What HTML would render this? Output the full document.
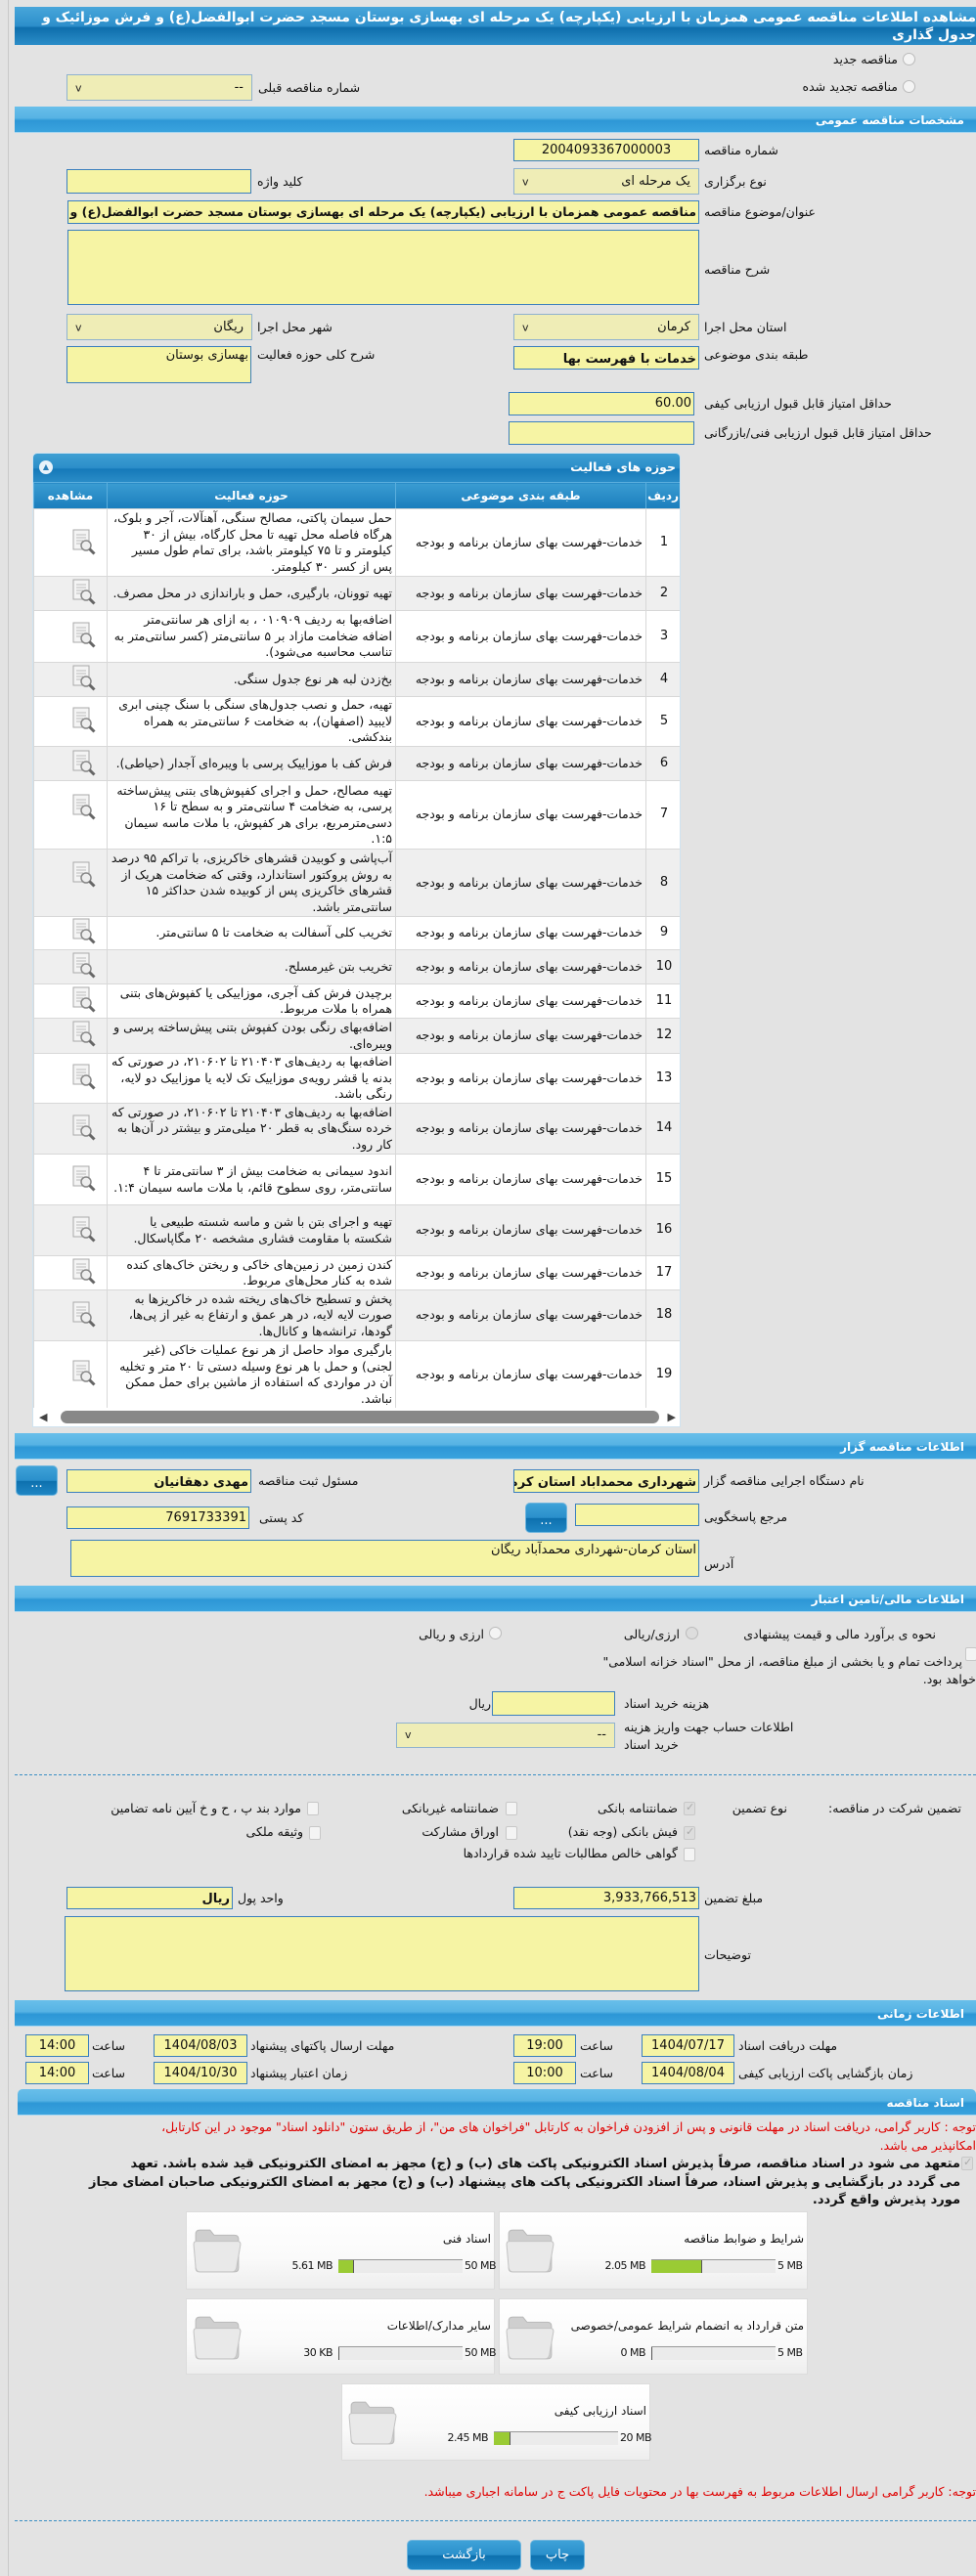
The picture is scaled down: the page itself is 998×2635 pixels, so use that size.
<!DOCTYPE html>
<html><head><meta charset="utf-8"><style>
*{margin:0;padding:0;box-sizing:border-box}
body{width:998px;height:2635px;background:#e3e3e3;font-family:"DejaVu Sans",sans-serif;font-size:12px;color:#111;position:relative;overflow:hidden}
.a{position:absolute}
.l{position:absolute;direction:rtl;white-space:nowrap;font-size:12.5px;text-align:right}
.m{position:absolute;direction:rtl;white-space:nowrap;font-size:12.5px;left:720px}
.f{position:absolute;background:#f6f4a4;border:1px solid #3b7fbe;direction:rtl;white-space:nowrap;overflow:hidden;font-size:13px;padding:0 2px;text-align:right}
.s{position:absolute;background:#efedb6;border:1px solid #8fb2cf;direction:rtl;font-size:13px;padding:0 8px;overflow:hidden;white-space:nowrap}
.s:after{content:"v";position:absolute;left:8px;top:50%;transform:translateY(-50%);font-size:11px;color:#222}
.sec{position:absolute;left:15px;width:983px;height:27px;background:linear-gradient(#68bfea,#57b3e4 45%,#2d97d6 55%,#3aa3de);color:#fff;font-weight:bold;font-size:12px;direction:rtl;padding:7px 12px 0 0;border-bottom:1px solid #a8d6ef}
.btn{position:absolute;background:linear-gradient(#3ea2d8,#2a8fcb 50%,#0d70ae 52%,#1f86c4);border:1px solid #6fb5dd;border-radius:5px;color:#fff;text-align:center;font-size:13px}
table{border-collapse:collapse;table-layout:fixed;direction:rtl}
td{border:1px solid #d8d8d8;vertical-align:middle;font-size:12px;line-height:17px;padding:0 3px;overflow:hidden}
tr.o td{background:#fff}tr.e td{background:#efefef}
.cb{position:absolute;width:12px;height:14px;border:1px solid #c8c8c8;border-radius:2px;background:#f4f4f4}
.cb.k{background:#ddd}
.cb.k:after{content:"✓";position:absolute;left:1px;top:-2px;font-size:11px;color:#aaa}
.rd{position:absolute;width:13px;height:13px;border:1px solid #bbb;border-radius:50%;background:#f4f4f4}
.doc{position:absolute;width:316px;height:80px;background:linear-gradient(#fff,#fafafa 60%,#eeeeee);border:1px solid #dcdcdc}
.doc .t{position:absolute;right:3px;top:20px;direction:rtl;font-size:12px;white-space:nowrap}
.doc .bar{position:absolute;left:155px;top:48px;width:127px;height:14px;background:#ebebeb;border-top:1px solid #999}
.doc .bar i{position:absolute;left:0;top:0;bottom:0;background:#9acb34;border-right:1px solid #555}
.doc .mx{position:absolute;left:284px;top:48px;font-size:11px;letter-spacing:-0.5px;white-space:nowrap}
.doc .cu{position:absolute;right:165px;top:48px;font-size:11px;letter-spacing:-0.5px;white-space:nowrap}
.doc svg{position:absolute;left:4px;top:14px}
#tb td{font-size:12.5px;line-height:16.5px}
#tb td:first-child{text-align:center;font-size:13px}
</style></head><body>
<div class="a" style="left:8px;top:0;width:1px;height:2635px;background:#c9c9c9"></div>
<div class="a" style="left:15px;top:7px;width:983px;height:39px;background:linear-gradient(#48a6da,#2d8fcb 50%,#0e6eac 55%,#2b8dc8);color:#fff;font-weight:bold;font-size:14px;line-height:18px;direction:rtl;padding:2px 0 0 0;white-space:normal;overflow:hidden">مشاهده اطلاعات مناقصه عمومی همزمان با ارزیابی (یکپارچه) یک مرحله ای بهسازی بوستان مسجد حضرت ابوالفضل(ع) و فرش موزائیک و جدول گذاری</div>

<div class="rd" style="left:923px;top:54px"></div><div class="l" style="right:80px;top:53px">مناقصه جدید</div>
<div class="rd" style="left:923px;top:82px"></div><div class="l" style="right:80px;top:81px">مناقصه تجدید شده</div>
<div class="s" style="left:68px;top:76px;width:190px;height:27px;line-height:25px">--</div>
<div class="l" style="left:264px;top:82px">شماره مناقصه قبلی</div>

<div class="sec" style="top:109px">مشخصات مناقصه عمومی</div>

<div class="f" style="left:525px;top:142px;width:190px;height:23px;line-height:21px;text-align:center">2004093367000003</div>
<div class="m" style="top:146px">شماره مناقصه</div>
<div class="s" style="left:525px;top:172px;width:190px;height:27px;line-height:25px">یک مرحله ای</div>
<div class="m" style="top:178px">نوع برگزاری</div>
<div class="f" style="left:68px;top:173px;width:189px;height:25px"></div>
<div class="l" style="left:263px;top:178px">کلید واژه</div>
<div class="f" style="left:69px;top:205px;width:646px;height:24px;line-height:22px;font-weight:bold;font-size:12.5px">مناقصه عمومی همزمان با ارزیابی (یکپارچه) یک مرحله ای بهسازی بوستان مسجد حضرت ابوالفضل(ع) و فرش موزائیک و جدول گذاری</div>
<div class="m" style="top:209px">عنوان/موضوع مناقصه</div>
<div class="f" style="left:69px;top:235px;width:646px;height:77px"></div>
<div class="m" style="top:268px">شرح مناقصه</div>
<div class="s" style="left:525px;top:321px;width:190px;height:27px;line-height:25px">کرمان</div>
<div class="m" style="top:327px">استان محل اجرا</div>
<div class="s" style="left:68px;top:321px;width:190px;height:27px;line-height:25px">ریگان</div>
<div class="l" style="left:263px;top:327px">شهر محل اجرا</div>
<div class="f" style="left:525px;top:354px;width:190px;height:24px;line-height:26px;font-weight:bold">خدمات با فهرست بها</div>
<div class="m" style="top:355px">طبقه بندی موضوعی</div>
<div class="f" style="left:68px;top:354px;width:189px;height:38px;line-height:18px">بهسازی بوستان</div>
<div class="l" style="left:263px;top:355px">شرح کلی حوزه فعالیت</div>
<div class="f" style="left:520px;top:401px;width:190px;height:24px;line-height:22px">60.00</div>
<div class="m" style="top:405px">حداقل امتیاز قابل قبول ارزیابی کیفی</div>
<div class="f" style="left:520px;top:431px;width:190px;height:24px"></div>
<div class="m" style="top:435px">حداقل امتیاز قابل قبول ارزیابی فنی/بازرگانی</div>

<!-- activity panel -->
<div class="a" style="left:33px;top:463px;width:663px;height:997px;background:#fff;border:1px solid #cfe3f0;border-radius:5px 5px 0 0;overflow:hidden">
<div style="height:29px;background:linear-gradient(#3e9fd3,#2c8ec9 50%,#1579b9 55%,#2a8cc7);color:#fff;font-weight:bold;font-size:12.5px;direction:rtl;padding:6px 4px 0 0;position:relative">حوزه های فعالیت<span style="position:absolute;left:6px;top:7px;width:14px;height:14px;border-radius:50%;background:#e8f2fa;color:#2a7fb8;font-size:8px;line-height:14px;text-align:center">▲</span></div>
<table style="width:663px;position:absolute;top:29px;left:0">
<colgroup><col style="width:37px"><col style="width:256px"><col style="width:295px"><col style="width:75px"></colgroup>
<tr style="height:27px"><td style="background:linear-gradient(#3a9cd2,#1a7dbc);color:#fff;font-weight:bold;border-color:#5aaedd;text-align:right">ردیف</td><td style="background:linear-gradient(#3a9cd2,#1a7dbc);color:#fff;font-weight:bold;border-color:#5aaedd;text-align:center">طبقه بندی موضوعی</td><td style="background:linear-gradient(#3a9cd2,#1a7dbc);color:#fff;font-weight:bold;border-color:#5aaedd;text-align:center">حوزه فعالیت</td><td style="background:linear-gradient(#3a9cd2,#1a7dbc);color:#fff;font-weight:bold;border-color:#5aaedd;text-align:center">مشاهده</td></tr>
</table>
<table id="tb" style="width:663px;position:absolute;top:56px;left:0">
<colgroup><col style="width:37px"><col style="width:256px"><col style="width:295px"><col style="width:75px"></colgroup>
<tr class="o" style="height:69px"><td>1</td><td>خدمات-فهرست بهای سازمان برنامه و بودجه</td><td>حمل سیمان پاکتی، مصالح سنگی، آهنآلات، آجر و بلوک، هرگاه فاصله محل تهیه تا محل کارگاه، بیش از ۳۰ کیلومتر و تا ۷۵ کیلومتر باشد، برای تمام طول مسیر پس از کسر ۳۰ کیلومتر.</td><td></td></tr>
<tr class="e" style="height:35px"><td>2</td><td>خدمات-فهرست بهای سازمان برنامه و بودجه</td><td>تهیه توونان، بارگیری، حمل و باراندازی در محل مصرف.</td><td></td></tr>
<tr class="o" style="height:53px"><td>3</td><td>خدمات-فهرست بهای سازمان برنامه و بودجه</td><td>اضافه‌بها به ردیف ۰۱۰۹۰۹ ، به ازای هر سانتی‌متر اضافه ضخامت مازاد بر ۵ سانتی‌متر (کسر سانتی‌متر به تناسب محاسبه می‌شود).</td><td></td></tr>
<tr class="e" style="height:35px"><td>4</td><td>خدمات-فهرست بهای سازمان برنامه و بودجه</td><td>بخ‌زدن لبه هر نوع جدول سنگی.</td><td></td></tr>
<tr class="o" style="height:51px"><td>5</td><td>خدمات-فهرست بهای سازمان برنامه و بودجه</td><td>تهیه، حمل و نصب جدول‌های سنگی با سنگ چینی ابری لایبید (اصفهان)، به ضخامت ۶ سانتی‌متر به همراه بندکشی.</td><td></td></tr>
<tr class="e" style="height:35px"><td>6</td><td>خدمات-فهرست بهای سازمان برنامه و بودجه</td><td>فرش کف با موزاییک پرسی با ویبره‌ای آجدار (حیاطی).</td><td></td></tr>
<tr class="o" style="height:70px"><td>7</td><td>خدمات-فهرست بهای سازمان برنامه و بودجه</td><td>تهیه مصالح، حمل و اجرای کفپوش‌های بتنی پیش‌ساخته پرسی، به ضخامت ۴ سانتی‌متر و به سطح تا ۱۶ دسی‌مترمربع، برای هر کفپوش، با ملات ماسه سیمان ۱:۵.</td><td></td></tr>
<tr class="e" style="height:69px"><td>8</td><td>خدمات-فهرست بهای سازمان برنامه و بودجه</td><td>آب‌پاشی و کوبیدن قشرهای خاکریزی، با تراکم ۹۵ درصد به روش پروکتور استاندارد، وقتی که ضخامت هریک از قشرهای خاکریزی پس از کوبیده شدن حداکثر ۱۵ سانتی‌متر باشد.</td><td></td></tr>
<tr class="o" style="height:34px"><td>9</td><td>خدمات-فهرست بهای سازمان برنامه و بودجه</td><td>تخریب کلی آسفالت  به ضخامت تا ۵ سانتی‌متر.</td><td></td></tr>
<tr class="e" style="height:35px"><td>10</td><td>خدمات-فهرست بهای سازمان برنامه و بودجه</td><td>تخریب بتن غیرمسلح.</td><td></td></tr>
<tr class="o" style="height:35px"><td>11</td><td>خدمات-فهرست بهای سازمان برنامه و بودجه</td><td>برچیدن فرش کف آجری، موزاییکی یا کفپوش‌های بتنی همراه با ملات مربوط.</td><td></td></tr>
<tr class="e" style="height:36px"><td>12</td><td>خدمات-فهرست بهای سازمان برنامه و بودجه</td><td>اضافه‌بهای رنگی بودن کفپوش بتنی پیش‌ساخته پرسی و ویبره‌ای.</td><td></td></tr>
<tr class="o" style="height:51px"><td>13</td><td>خدمات-فهرست بهای سازمان برنامه و بودجه</td><td>اضافه‌بها به ردیف‌های ۲۱۰۴۰۳ تا ۲۱۰۶۰۲، در صورتی که بدنه یا قشر رویه‌ی موزاییک تک لایه یا موزاییک دو لایه، رنگی باشد.</td><td></td></tr>
<tr class="e" style="height:52px"><td>14</td><td>خدمات-فهرست بهای سازمان برنامه و بودجه</td><td>اضافه‌بها به ردیف‌های ۲۱۰۴۰۳ تا ۲۱۰۶۰۲، در صورتی که خرده سنگ‌های به قطر ۲۰ میلی‌متر و بیشتر در آن‌ها به کار رود.</td><td></td></tr>
<tr class="o" style="height:52px"><td>15</td><td>خدمات-فهرست بهای سازمان برنامه و بودجه</td><td>اندود سیمانی به ضخامت بیش از ۳ سانتی‌متر تا ۴ سانتی‌متر، روی سطوح قائم، با ملات ماسه سیمان ۱:۴.</td><td></td></tr>
<tr class="e" style="height:52px"><td>16</td><td>خدمات-فهرست بهای سازمان برنامه و بودجه</td><td>تهیه و اجرای بتن با شن و ماسه شسته طبیعی یا شکسته با مقاومت فشاری مشخصه ۲۰ مگاپاسکال.</td><td></td></tr>
<tr class="o" style="height:35px"><td>17</td><td>خدمات-فهرست بهای سازمان برنامه و بودجه</td><td>کندن زمین در زمین‌های خاکی و ریختن خاک‌های کنده شده به کنار محل‌های مربوط.</td><td></td></tr>
<tr class="e" style="height:52px"><td>18</td><td>خدمات-فهرست بهای سازمان برنامه و بودجه</td><td>پخش و تسطیح خاک‌های ریخته شده در خاکریزها به صورت لایه لایه، در هر عمق و ارتفاع به غیر از پی‌ها، گودها، ترانشه‌ها و کانال‌ها.</td><td></td></tr>
<tr class="o" style="height:69px"><td>19</td><td>خدمات-فهرست بهای سازمان برنامه و بودجه</td><td>بارگیری مواد حاصل از هر نوع عملیات خاکی (غیر لجنی) و حمل با هر نوع وسیله دستی تا ۲۰ متر و تخلیه آن در مواردی که استفاده از ماشین برای حمل ممکن نباشد.</td><td></td></tr>
</table>
<div style="position:absolute;left:0;top:976px;width:663px;height:21px;background:#fff">
<div style="position:absolute;left:28px;top:3px;width:612px;height:13px;border-radius:7px;background:#888"></div>
<div style="position:absolute;left:6px;top:3px;font-size:11px;color:#444">◀</div><div style="position:absolute;right:6px;top:3px;font-size:11px;color:#444">▶</div></div>
</div>
<svg width="0" height="0" style="position:absolute"><defs><g id="mg"><rect x="2" y="1" width="16" height="20" fill="#f4f4f4" stroke="#aaa"/><path d="M5 6h10M5 9h10M5 12h7M5 15h5" stroke="#bbb"/><circle cx="15" cy="17" r="5" fill="#eee" stroke="#888" stroke-width="1.5"/><path d="M18.5 20.5l5 5" stroke="#666" stroke-width="3"/></g>
<g id="fd"><path d="M4 8 q0-4 4-4 h10 l4 5 h20 q4 0 4 4 v28 q0 4-4 4 h-34 q-4 0-4-4z" fill="#cfcfcf" stroke="#bbb"/><path d="M2 18 q0-3 3-3 h40 q3 0 3 3 l-4 23 q-1 4-4 4 h-32 q-3 0-4-4z" fill="#e9e9e9" stroke="#c4c4c4"/></g></defs></svg>

<!-- tenderer -->
<div class="sec" style="top:1466px">اطلاعات مناقصه گزار</div>
<div class="f" style="left:525px;top:1503px;width:190px;height:24px;line-height:26px;font-weight:bold">شهرداری محمداباد استان کرمان</div>
<div class="m" style="top:1507px">نام دستگاه اجرایی مناقصه گزار</div>
<div class="btn" style="left:16px;top:1499px;width:43px;height:31px;line-height:36px">...</div>
<div class="f" style="left:68px;top:1503px;width:189px;height:24px;line-height:26px;font-weight:bold">مهدی دهقانیان</div>
<div class="l" style="left:264px;top:1507px">مسئول ثبت مناقصه</div>
<div class="f" style="left:588px;top:1538px;width:127px;height:23px"></div>
<div class="m" style="top:1544px">مرجع پاسخگویی</div>
<div class="btn" style="left:537px;top:1537px;width:43px;height:31px;line-height:36px">...</div>
<div class="f" style="left:68px;top:1541px;width:187px;height:23px;line-height:22px">7691733391</div>
<div class="l" style="left:265px;top:1545px">کد پستی</div>
<div class="f" style="left:72px;top:1575px;width:643px;height:38px;line-height:20px">استان کرمان-شهرداری محمدآباد ریگان</div>
<div class="m" style="top:1592px">آدرس</div>

<!-- finance -->
<div class="sec" style="top:1622px">اطلاعات مالی/تامین اعتبار</div>
<div class="l" style="right:41px;top:1664px">نحوه ی برآورد مالی و قیمت پیشنهادی</div>
<div class="rd" style="left:701px;top:1664px;background:#ddd"></div><div class="l" style="right:303px;top:1664px">ارزی/ریالی</div>
<div class="rd" style="left:500px;top:1664px"></div><div class="l" style="right:503px;top:1664px">ارزی و ریالی</div>
<div class="cb" style="left:987px;top:1685px"></div>
<div class="l" style="right:14px;top:1692px">پرداخت تمام و یا بخشی از مبلغ مناقصه، از محل "اسناد خزانه اسلامی"</div>
<div class="l" style="right:0px;top:1710px">خواهد بود.</div>
<div class="f" style="left:503px;top:1730px;width:126px;height:25px"></div>
<div class="l" style="right:496px;top:1735px">ریال</div>
<div class="l" style="left:638px;top:1735px">هزینه خرید اسناد</div>
<div class="s" style="left:405px;top:1762px;width:224px;height:26px;line-height:24px">--</div>
<div class="l" style="left:638px;top:1759px">اطلاعات حساب جهت واریز هزینه</div>
<div class="l" style="left:638px;top:1777px">خرید اسناد</div>
<div class="a" style="left:15px;top:1815px;width:983px;border-top:1px dashed #3b8fc4"></div>

<div class="l" style="right:15px;top:1842px">تضمین شرکت در مناقصه:</div>
<div class="l" style="right:193px;top:1842px">نوع تضمین</div>
<div class="cb k" style="left:699px;top:1843px"></div><div class="l" style="right:305px;top:1842px">ضمانتنامه بانکی</div>
<div class="cb" style="left:517px;top:1843px"></div><div class="l" style="right:488px;top:1842px">ضمانتنامه غیربانکی</div>
<div class="cb" style="left:314px;top:1843px"></div><div class="l" style="right:690px;top:1842px">موارد بند پ ، ح و خ آیین نامه تضامین</div>
<div class="cb k" style="left:699px;top:1868px"></div><div class="l" style="right:305px;top:1866px">فیش بانکی (وجه نقد)</div>
<div class="cb" style="left:517px;top:1868px"></div><div class="l" style="right:488px;top:1866px">اوراق مشارکت</div>
<div class="cb" style="left:316px;top:1868px"></div><div class="l" style="right:688px;top:1866px">وثیقه ملکی</div>
<div class="cb" style="left:699px;top:1890px"></div><div class="l" style="right:305px;top:1888px">گواهی خالص مطالبات تایید شده قراردادها</div>

<div class="f" style="left:525px;top:1930px;width:190px;height:23px;line-height:22px">3,933,766,513</div>
<div class="m" style="top:1934px">مبلغ تضمین</div>
<div class="f" style="left:68px;top:1930px;width:170px;height:23px;line-height:24px;font-weight:bold">ریال</div>
<div class="l" style="left:243px;top:1934px">واحد پول</div>
<div class="f" style="left:66px;top:1960px;width:649px;height:77px"></div>
<div class="m" style="top:1992px">توضیحات</div>

<!-- time -->
<div class="sec" style="top:2046px">اطلاعات زمانی</div>
<div class="f" style="left:656px;top:2081px;width:95px;height:23px;line-height:22px;text-align:center">1404/07/17</div>
<div class="l" style="left:755px;top:2085px">مهلت دریافت اسناد</div>
<div class="f" style="left:525px;top:2081px;width:64px;height:23px;line-height:22px;text-align:center">19:00</div>
<div class="l" style="left:593px;top:2085px">ساعت</div>
<div class="f" style="left:157px;top:2081px;width:96px;height:23px;line-height:22px;text-align:center">1404/08/03</div>
<div class="l" style="left:256px;top:2085px">مهلت ارسال پاکتهای پیشنهاد</div>
<div class="f" style="left:26px;top:2081px;width:65px;height:23px;line-height:22px;text-align:center">14:00</div>
<div class="l" style="left:94px;top:2085px">ساعت</div>
<div class="f" style="left:656px;top:2109px;width:95px;height:23px;line-height:22px;text-align:center">1404/08/04</div>
<div class="l" style="left:755px;top:2113px">زمان بازگشایی پاکت ارزیابی کیفی</div>
<div class="f" style="left:525px;top:2109px;width:64px;height:23px;line-height:22px;text-align:center">10:00</div>
<div class="l" style="left:593px;top:2113px">ساعت</div>
<div class="f" style="left:157px;top:2109px;width:96px;height:23px;line-height:22px;text-align:center">1404/10/30</div>
<div class="l" style="left:256px;top:2113px">زمان اعتبار پیشنهاد</div>
<div class="f" style="left:26px;top:2109px;width:65px;height:23px;line-height:22px;text-align:center">14:00</div>
<div class="l" style="left:94px;top:2113px">ساعت</div>

<div class="sec" style="top:2137px;left:18px;width:980px;border-radius:5px 5px 0 0">اسناد مناقصه</div>
<div class="l" style="right:0;top:2168px;color:#e00000;font-size:12.5px">توجه : کاربر گرامی، دریافت اسناد در مهلت قانونی و پس از افزودن فراخوان به کارتابل "فراخوان های من"، از طریق ستون "دانلود اسناد" موجود در این کارتابل،</div>
<div class="l" style="right:0;top:2187px;color:#e00000;font-size:12.5px">امکانپذیر می باشد.</div>
<div class="cb k" style="left:983px;top:2206px"></div>
<div class="a" style="left:10px;top:2205px;width:972px;direction:rtl;font-weight:bold;font-size:13px;line-height:18.5px;text-align:right">متعهد می شود در اسناد مناقصه، صرفاً پذیرش اسناد الکترونیکی پاکت های (ب) و (ج) مجهز به امضای الکترونیکی قید شده باشد. تعهد <br>می گردد در بازگشایی و پذیرش اسناد، صرفاً اسناد الکترونیکی پاکت های پیشنهاد (ب) و (ج) مجهز به امضای الکترونیکی صاحبان امضای مجاز<br>مورد پذیرش واقع گردد.</div>

<div class="doc" style="left:510px;top:2262px"><svg width="54" height="50" viewBox="0 0 50 48"><use href="#fd"/></svg><div class="t">شرایط و ضوابط مناقصه</div><div class="mx">5 MB</div><div class="bar"><i style="width:52px"></i></div><div class="cu">2.05 MB</div></div>
<div class="doc" style="left:190px;top:2262px"><svg width="54" height="50" viewBox="0 0 50 48"><use href="#fd"/></svg><div class="t">اسناد فنی</div><div class="mx">50 MB</div><div class="bar"><i style="width:16px"></i></div><div class="cu">5.61 MB</div></div>
<div class="doc" style="left:510px;top:2351px;height:78px"><svg width="54" height="50" viewBox="0 0 50 48"><use href="#fd"/></svg><div class="t">متن قرارداد به انضمام شرایط عمومی/خصوصی</div><div class="mx">5 MB</div><div class="bar"><i style="width:1px"></i></div><div class="cu">0 MB</div></div>
<div class="doc" style="left:190px;top:2351px;height:78px"><svg width="54" height="50" viewBox="0 0 50 48"><use href="#fd"/></svg><div class="t">سایر مدارک/اطلاعات</div><div class="mx">50 MB</div><div class="bar"><i style="width:1px"></i></div><div class="cu">30 KB</div></div>
<div class="doc" style="left:349px;top:2438px;height:79px"><svg width="54" height="50" viewBox="0 0 50 48"><use href="#fd"/></svg><div class="t">اسناد ارزیابی کیفی</div><div class="mx">20 MB</div><div class="bar"><i style="width:17px"></i></div><div class="cu">2.45 MB</div></div>

<div class="l" style="right:0;top:2541px;color:#e00000;font-size:12.5px">توجه: کاربر گرامی ارسال اطلاعات مربوط به فهرست بها در محتویات فایل پاکت ج در سامانه اجباری میباشد.</div>
<div class="a" style="left:15px;top:2578px;width:983px;border-top:1px dashed #3b8fc4"></div>
<div class="btn" style="left:416px;top:2598px;width:117px;height:31px;line-height:29px">بازگشت</div>
<div class="btn" style="left:542px;top:2598px;width:56px;height:31px;line-height:29px">چاپ</div>

<!-- magnifier icons -->
<div class="a" style="left:73px;top:519px;width:30px">
<svg class="a" style="top:22px" width="28" height="28"><use href="#mg"/></svg>
<svg class="a" style="top:73px" width="28" height="28"><use href="#mg"/></svg>
<svg class="a" style="top:117px" width="28" height="28"><use href="#mg"/></svg>
<svg class="a" style="top:161px" width="28" height="28"><use href="#mg"/></svg>
<svg class="a" style="top:204px" width="28" height="28"><use href="#mg"/></svg>
<svg class="a" style="top:248px" width="28" height="28"><use href="#mg"/></svg>
<svg class="a" style="top:293px" width="28" height="28"><use href="#mg"/></svg>
<svg class="a" style="top:362px" width="28" height="28"><use href="#mg"/></svg>
<svg class="a" style="top:420px" width="28" height="28"><use href="#mg"/></svg>
<svg class="a" style="top:455px" width="28" height="28"><use href="#mg"/></svg>
<svg class="a" style="top:490px" width="28" height="28"><use href="#mg"/></svg>
<svg class="a" style="top:525px" width="28" height="28"><use href="#mg"/></svg>
<svg class="a" style="top:569px" width="28" height="28"><use href="#mg"/></svg>
<svg class="a" style="top:621px" width="28" height="28"><use href="#mg"/></svg>
<svg class="a" style="top:673px" width="28" height="28"><use href="#mg"/></svg>
<svg class="a" style="top:725px" width="28" height="28"><use href="#mg"/></svg>
<svg class="a" style="top:768px" width="28" height="28"><use href="#mg"/></svg>
<svg class="a" style="top:812px" width="28" height="28"><use href="#mg"/></svg>
<svg class="a" style="top:872px" width="28" height="28"><use href="#mg"/></svg>
</div>
</body></html>
